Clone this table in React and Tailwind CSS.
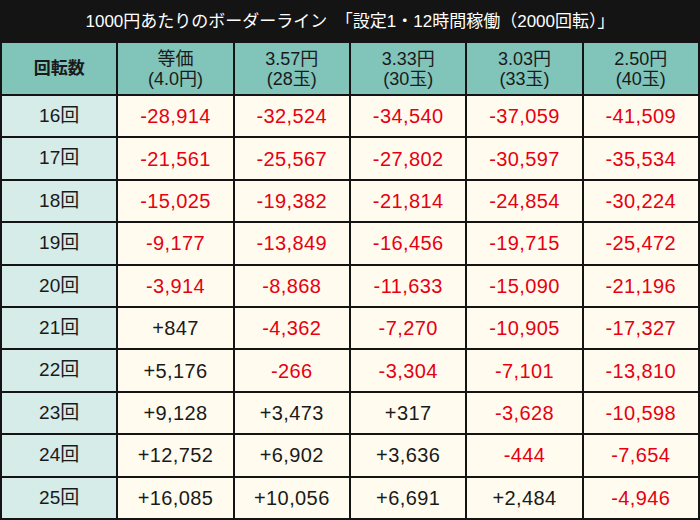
import React from "react";

const headers = [
  ["等価", "(4.0円)"],
  ["3.57円", "(28玉)"],
  ["3.33円", "(30玉)"],
  ["3.03円", "(33玉)"],
  ["2.50円", "(40玉)"],
];

const rows = [
  ["16回", "-28,914", "-32,524", "-34,540", "-37,059", "-41,509"],
  ["17回", "-21,561", "-25,567", "-27,802", "-30,597", "-35,534"],
  ["18回", "-15,025", "-19,382", "-21,814", "-24,854", "-30,224"],
  ["19回", "-9,177", "-13,849", "-16,456", "-19,715", "-25,472"],
  ["20回", "-3,914", "-8,868", "-11,633", "-15,090", "-21,196"],
  ["21回", "+847", "-4,362", "-7,270", "-10,905", "-17,327"],
  ["22回", "+5,176", "-266", "-3,304", "-7,101", "-13,810"],
  ["23回", "+9,128", "+3,473", "+317", "-3,628", "-10,598"],
  ["24回", "+12,752", "+6,902", "+3,636", "-444", "-7,654"],
  ["25回", "+16,085", "+10,056", "+6,691", "+2,484", "-4,946"],
];

const font = { fontFamily: '"Liberation Sans", "Noto Sans CJK JP", sans-serif' };

export default function App() {
  return (
    <div className="w-[700px] h-[520px] bg-[#141414] flex flex-col" style={font}>
      {/* タイトル */}
      <div className="h-[43px] flex items-center justify-center text-white text-[17px]">
        1000円あたりのボーダーライン　「設定1・12時間稼働（2000回転）」
      </div>

      <div className="flex-1 grid grid-cols-6 grid-rows-[51px_repeat(10,1fr)] gap-[2px] px-[2px] pb-[2px]">
        <div className="bg-[#80c4ba] flex items-center justify-center text-[17px] font-bold text-[#1a1a1a]">
          回転数
        </div>
        {headers.map(([a, b]) => (
          <div
            key={a}
            className="bg-[#80c4ba] flex flex-col items-center justify-center text-[18px] leading-[20px] text-[#1a1a1a]"
          >
            <span className="block">{a}</span>
            <span className="block">{b}</span>
          </div>
        ))}

        {rows.map((r) => (
          <React.Fragment key={r[0]}>
            <div className="bg-[#d6ece8] flex items-center justify-center text-[19px] text-[#1a1a1a]">
              {r[0]}
            </div>
            {r.slice(1).map((v, i) => (
              <div
                key={i}
                className={
                  "bg-[#fffcef] flex items-center justify-center text-[20px] tracking-[0.4px] " +
                  (v.startsWith("-") ? "text-[#e60012]" : "text-[#1a1a1a]")
                }
              >
                {v}
              </div>
            ))}
          </React.Fragment>
        ))}
      </div>
    </div>
  );
}
